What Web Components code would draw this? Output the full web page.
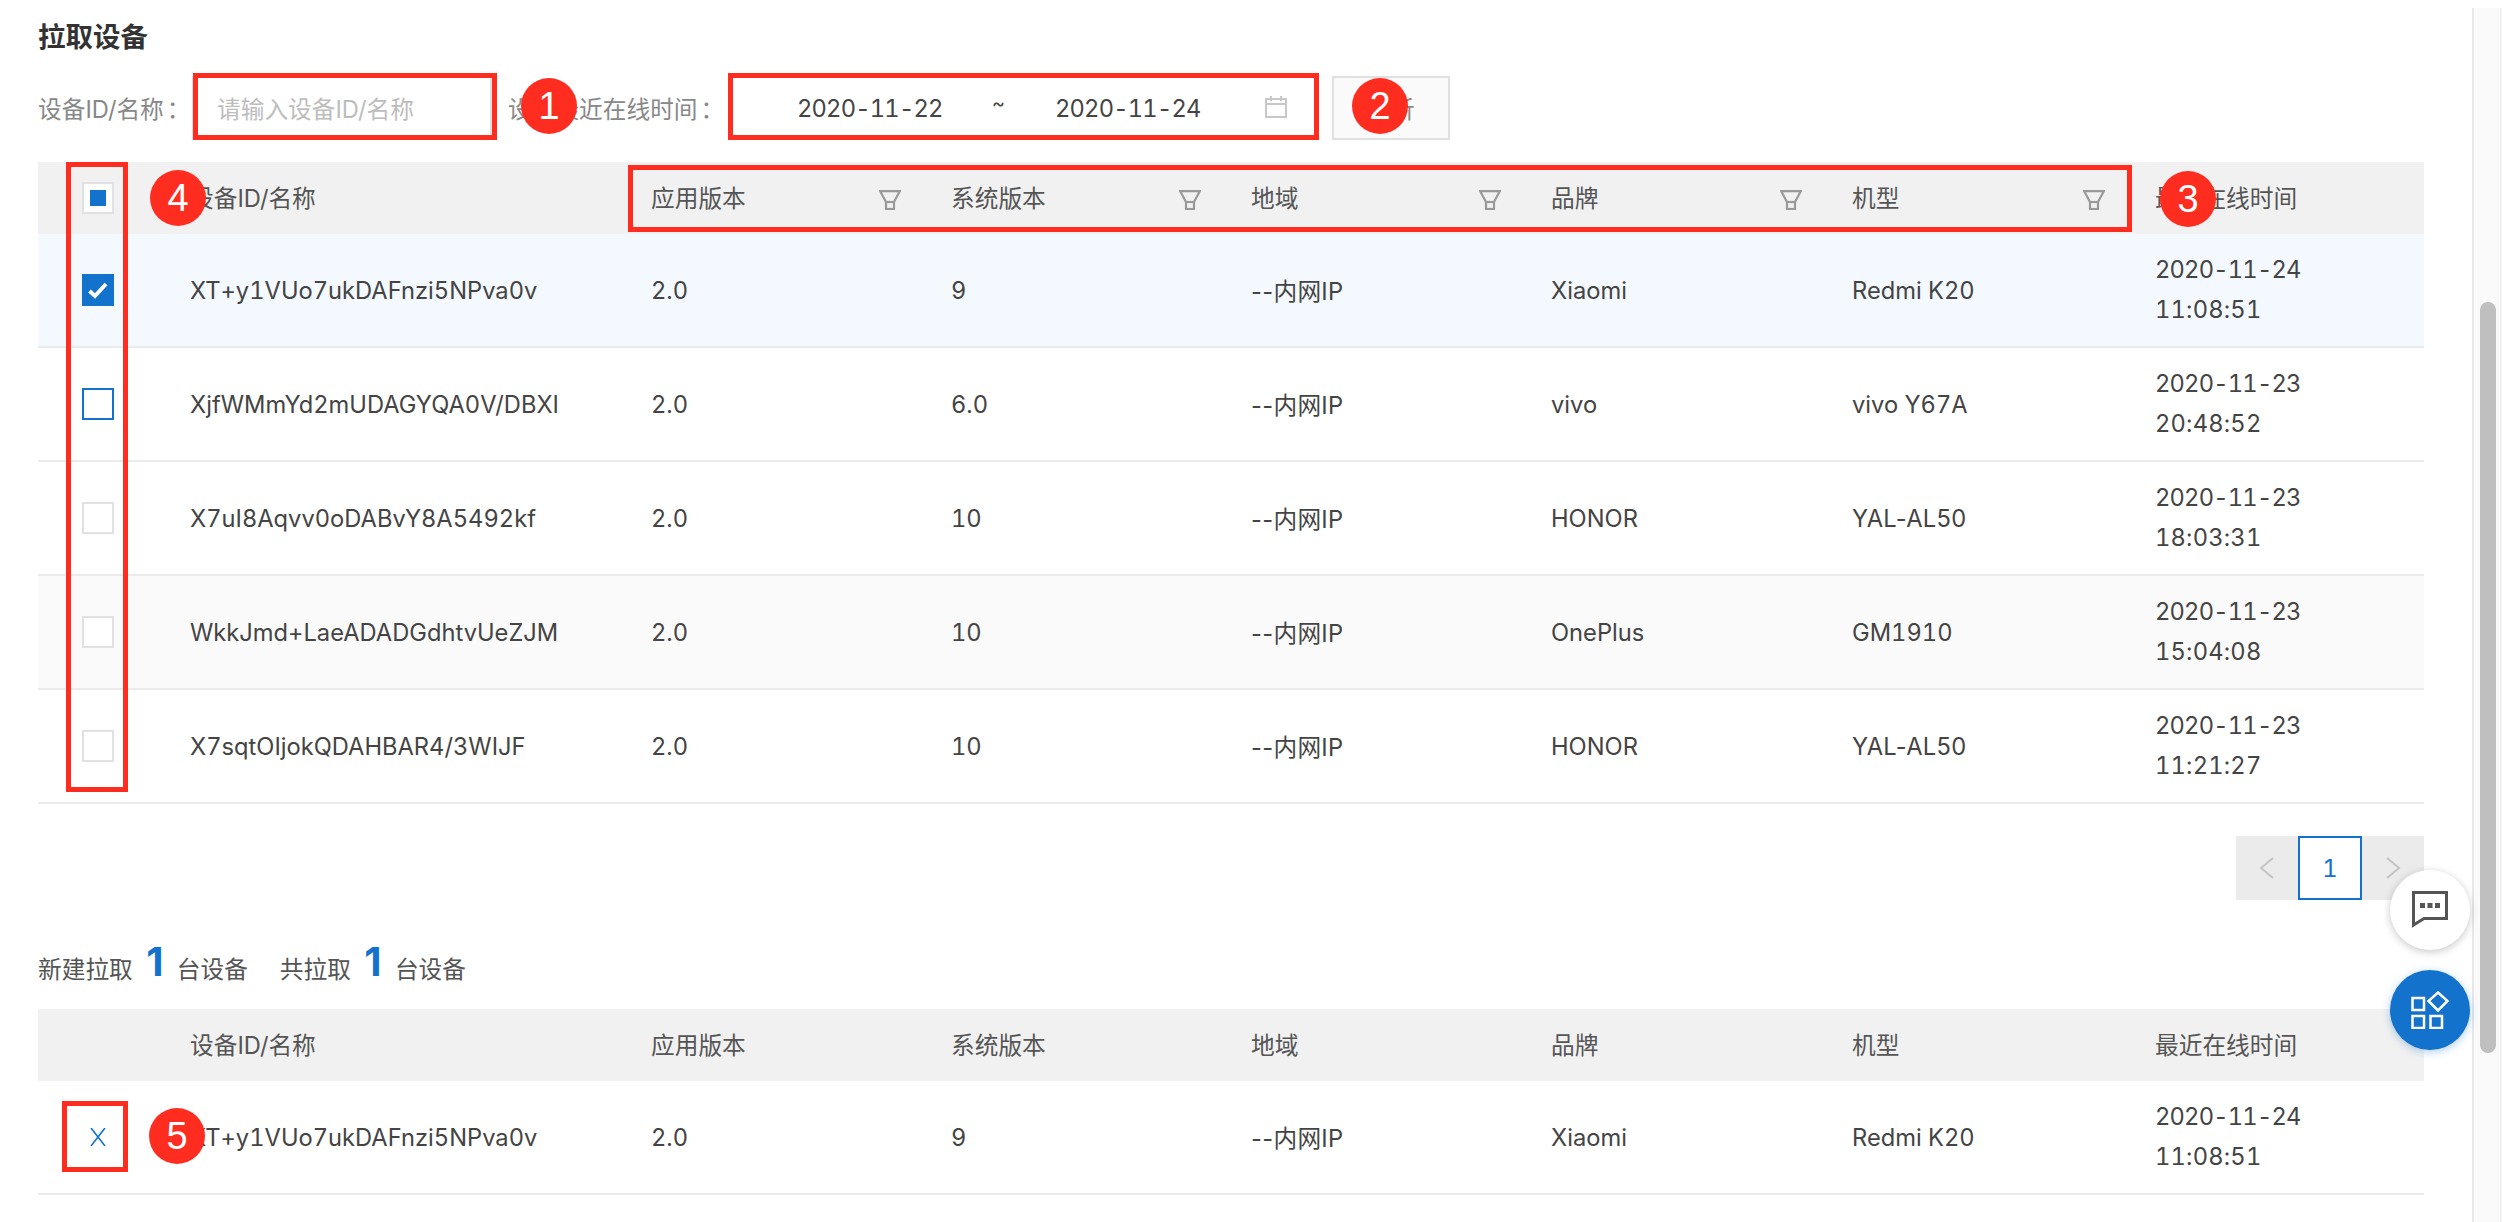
<!doctype html>
<html lang="zh"><head><meta charset="utf-8"><title>拉取设备</title>
<style>
html,body{margin:0;padding:0;background:#fff;height:100%;overflow:hidden}
body{font-family:Inter,"Noto Sans CJK SC",sans-serif;font-size:23.7px;color:#555;font-variant-numeric:tabular-nums}
</style></head><body>
<app-shell>
  <pull-page></pull-page>
</app-shell>
<script>
const FILTER=`<svg width="22" height="20" viewBox="0 0 22 20" fill="none" stroke="#999" stroke-width="2.2"><path d="M1.2 1.2H20.8L15 12H7Z"/><rect x="7" y="12" width="8" height="7"/></svg>`;
const CELLS='128px 461px 300px 300px 300px 301px 303px 293px';
const ROWS=[
 ['XT+y1VUo7ukDAFnzi5NPva0v','2.0','9','--内网IP','Xiaomi','Redmi K20','2020-11-24','11:08:51'],
 ['XjfWMmYd2mUDAGYQA0V/DBXI','2.0','6.0','--内网IP','vivo','vivo Y67A','2020-11-23','20:48:52'],
 ['X7uI8Aqvv0oDABvY8A5492kf','2.0','10','--内网IP','HONOR','YAL-AL50','2020-11-23','18:03:31'],
 ['WkkJmd+LaeADADGdhtvUeZJM','2.0','10','--内网IP','OnePlus','GM1910','2020-11-23','15:04:08'],
 ['X7sqtOIjokQDAHBAR4/3WIJF','2.0','10','--内网IP','HONOR','YAL-AL50','2020-11-23','11:21:27']];
const HEAD=['设备ID/名称','应用版本','系统版本','地域','品牌','机型','最近在线时间'];

class AppShell extends HTMLElement{constructor(){super();this.attachShadow({mode:'open'}).innerHTML=`<style>
:host{display:flex;height:100vh;position:relative;overflow:hidden}
.main{flex:1;min-width:0}
.bar{width:30px;box-sizing:border-box;margin-top:8px;background:#fafafa;border-left:2px solid #e9e9e9;border-right:2px solid #f1f1f1;padding:294px 4px 0 6px}
.thumb{height:751px;background:#bfbfbf;border-radius:8px}
.fab{position:absolute;left:2390px;width:80px;height:80px;border-radius:50%;display:flex;align-items:center;justify-content:center}
.chat{top:870px;background:#fff;box-shadow:0 2px 8px rgba(0,0,0,.22)}
.apps{top:970px;background:#1272cc;box-shadow:0 2px 8px rgba(18,114,204,.35)}
</style><div class="main"><slot></slot></div><div class="bar"><div class="thumb"></div></div>
<div class="fab chat"><svg width="36" height="38" viewBox="0 0 36 38" fill="none"><path d="M1.5 1.5H34.5V27.5H12L1.5 34Z" stroke="#555" stroke-width="3"/><rect x="8" y="12" width="5" height="5" fill="#555"/><rect x="15.5" y="12" width="5" height="5" fill="#555"/><rect x="23" y="12" width="5" height="5" fill="#555"/></svg></div>
<div class="fab apps"><svg width="38" height="38" viewBox="0 0 38 38" fill="none" stroke="#fff" stroke-width="2.5"><rect x="1.5" y="7" width="11.5" height="12"/><path d="M27 1.5 36.5 10 27 19.5 17.5 10Z"/><rect x="1.5" y="25" width="11.5" height="12"/><rect x="19.5" y="25" width="11.5" height="12"/></svg></div>`}}
customElements.define('app-shell',AppShell);

class CheckBox extends HTMLElement{constructor(){super();this.attachShadow({mode:'open'})}
connectedCallback(){const s=this.getAttribute('state')||'off';
 const inner=s==='on'?`<svg width="22" height="20" viewBox="0 0 22 20" fill="none"><path d="M2.5 11 8 16 19 4" stroke="#fff" stroke-width="4"/></svg>`:s==='mixed'?`<i></i>`:'';
 this.shadowRoot.innerHTML=`<style>
:host{display:flex;align-items:center;justify-content:center;width:32px;height:32px;box-sizing:border-box;background:#fff;border:2px solid #e1e1e1}
:host([state=on]){background:#1272cc;border-color:#1272cc}
:host([state=focus]){border-color:#1272cc}
i{display:block;width:16px;height:16px;background:#1272cc}
</style>${inner}`}}
customElements.define('check-box',CheckBox);

class TableHead extends HTMLElement{constructor(){super();this.attachShadow({mode:'open'})}
connectedCallback(){const filt=this.hasAttribute('filters'),chk=this.hasAttribute('check');
 const cols=HEAD.map((h,i)=>`<div class="c"><span class="h">${h}</span>${filt&&i>0&&i<6?`<span class="f">${FILTER}</span>`:''}</div>`).join('');
 this.shadowRoot.innerHTML=`<style>
:host{display:grid;grid-template-columns:${CELLS};height:72px;background:#f1f1f1;align-items:center;color:#555}
.k{display:flex;padding-left:44px}
.c{padding-left:24px;display:flex;align-items:center;justify-content:space-between;padding-right:26px;white-space:nowrap}
.h{margin-bottom:2px}
.f{display:flex;margin-top:4px}
</style><div class="k">${chk?'<check-box state="mixed"></check-box>':''}</div>${cols}`}}
customElements.define('table-head',TableHead);

class TableRow extends HTMLElement{constructor(){super();this.attachShadow({mode:'open'})}
connectedCallback(){const d=JSON.parse(this.getAttribute('data'));const st=this.getAttribute('check');
 const k=st?`<check-box state="${st}"></check-box>`:`<svg width="18" height="18" viewBox="0 0 18 18" fill="none" stroke="#1272cc" stroke-width="1.6"><path d="M2 0 16 18M16 0 2 18"/></svg>`;
 const cells=d.slice(0,6).map(t=>`<div class="c${t.includes('-')?' nt':''}">${t}</div>`).join('');
 this.shadowRoot.innerHTML=`<style>
:host{display:grid;grid-template-columns:${CELLS};height:114px;box-sizing:border-box;border-bottom:2px solid #ebebeb;align-items:center;color:#444}
:host([tone=sel]){background:#f3f9fe}
:host([tone=alt]){background:#fafafa}
.k{display:flex;justify-content:center;width:32px;margin-left:44px}
.c{padding-left:24px;white-space:nowrap}
.nt{font-variant-numeric:normal;letter-spacing:.3px}
.t{line-height:40px;display:flex;flex-direction:column}
.dt{letter-spacing:-.8px}.tm{letter-spacing:.2px}
</style><div class="k">${k}</div>${cells}<div class="c t"><span class="dt">${d[6]}</span><span class="tm">${d[7]}</span></div>`}}
customElements.define('table-row',TableRow);

class PagerBar extends HTMLElement{constructor(){super();this.attachShadow({mode:'open'}).innerHTML=`<style>
:host{display:flex;justify-content:flex-end}
.p{display:flex;background:#ebebeb;height:64px;width:188px}
.a{flex:1;display:flex;align-items:center;justify-content:center}
.n{width:64px;box-sizing:border-box;border:2px solid #1272cc;background:#fff;color:#1272cc;display:flex;align-items:center;justify-content:center}
</style><div class="p"><div class="a"><svg width="16" height="22" viewBox="0 0 16 22" fill="none" stroke="#c4c4c4" stroke-width="2"><path d="M14 1 2 11l12 10"/></svg></div><div class="n">1</div><div class="a"><svg width="16" height="22" viewBox="0 0 16 22" fill="none" stroke="#c4c4c4" stroke-width="2"><path d="M2 1l12 10L2 21"/></svg></div></div>`}}
customElements.define('pager-bar',PagerBar);

class FilterBar extends HTMLElement{constructor(){super();this.attachShadow({mode:'open'}).innerHTML=`<style>
:host{display:flex;align-items:stretch;height:64px;color:#888;white-space:nowrap}
.l{display:flex;align-items:center;flex:none}
.l1{width:154px}.l2{width:220px;margin-left:16px}
.col{margin-left:3px}
.input{width:300px;flex:none;box-sizing:border-box;border:2px solid #e0e0e0;display:flex;align-items:center;padding-left:23px;color:#bdbdbd}
.date{width:591px;flex:none;box-sizing:border-box;border:2px solid #e0e0e0;display:flex;align-items:center;color:#444;padding-left:67px}
.d1{width:195px;flex:none;letter-spacing:-.8px}.tl{width:63px;flex:none;font-size:20px;margin-top:-10px}.d2{width:210px;flex:none;letter-spacing:-.8px}
.cal{display:flex;margin-top:-3px}
.btn{width:118px;margin-left:13px;flex:none;box-sizing:border-box;border:2px solid #e0e0e0;background:#fafafa;display:flex;align-items:center;justify-content:center;color:#888}
</style><div class="l l1">设备ID/名称<span class="col">：</span></div><div class="input">请输入设备ID/名称</div><div class="l l2">设备最近在线时间<span class="col">：</span></div>
<div class="date"><span class="d1">2020-11-22</span><span class="tl">~</span><span class="d2">2020-11-24</span><span class="cal"><svg width="22" height="22" viewBox="0 0 22 22" fill="none" stroke="#c8c8c8" stroke-width="2"><rect x="1" y="3" width="20" height="18"/><path d="M1 8H21M6 0V5M16 0V5"/></svg></span></div>
<div class="btn">分析</div>`}}
customElements.define('filter-bar',FilterBar);

class PullSummary extends HTMLElement{constructor(){super();this.attachShadow({mode:'open'}).innerHTML=`<style>
:host{display:flex;align-items:center;height:54px;color:#555;white-space:nowrap;font-variant-numeric:normal}
b{font-size:40px;font-weight:700;color:#1272cc;line-height:1;margin-top:-12px;width:44px;text-align:center;flex:none}
.g{margin-left:32px;display:flex;align-items:center}
</style>新建拉取<b>1</b>台设备<div class="g">共拉取<b>1</b>台设备</div>`}}
customElements.define('pull-summary',PullSummary);

class NumBadge extends HTMLElement{constructor(){super();this.attachShadow({mode:'open'}).innerHTML=`<style>
:host{position:absolute;width:56px;height:56px;border-radius:50%;background:#ff2d20;color:#fff;display:flex;align-items:center;justify-content:center;font:400 38px "Liberation Sans",sans-serif;transform:translate(-50%,-50%)}
</style><slot></slot>`}}
customElements.define('num-badge',NumBadge);

class RedBox extends HTMLElement{constructor(){super();this.attachShadow({mode:'open'}).innerHTML=`<style>
:host{position:absolute;box-sizing:border-box;border:5px solid #ff2d20;display:block}
</style>`}}
customElements.define('red-box',RedBox);

class PullPage extends HTMLElement{constructor(){super();
 const row=(d,c,t)=>`<table-row data='${JSON.stringify(d)}' ${c?`check="${c}"`:''} ${t?`tone="${t}"`:''}></table-row>`;
 const states=['on','focus','off','off','off'],tones=['sel','','','alt',''];
 const box=(l,t,r,b)=>`<red-box style="left:${l}px;top:${t}px;width:${r-l}px;height:${b-t}px"></red-box>`;
 const num=(n,x,y)=>`<num-badge style="left:${x}px;top:${y}px">${n}</num-badge>`;
 this.attachShadow({mode:'open'}).innerHTML=`<style>
:host{display:block;position:relative;height:1222px;padding:21px 48px 0 38px;box-sizing:border-box}
h1{margin:0;font-size:27.5px;font-weight:700;color:#333;line-height:32px}
filter-bar{margin-top:23px}
.t1{margin-top:22px}
pager-bar{margin-top:32px}
pull-summary{margin-top:41px}
.t2{margin-top:14px}
</style>
<h1>拉取设备</h1>
<filter-bar></filter-bar>
<div class="t1"><table-head filters check></table-head>${ROWS.map((d,i)=>row(d,states[i],tones[i])).join('')}</div>
<pager-bar></pager-bar>
<pull-summary></pull-summary>
<div class="t2"><table-head></table-head>${row(ROWS[0])}</div>
${box(193,73,497,140)}${box(728,73,1319,140)}${box(628,165,2132,232)}${box(66,162,128,792)}${box(62,1101,128,1172)}
${num(1,549,106)}${num(2,1380,106)}${num(3,2188,199)}${num(4,178,198)}${num(5,177,1136)}`}}
customElements.define('pull-page',PullPage);
</script></body></html>
